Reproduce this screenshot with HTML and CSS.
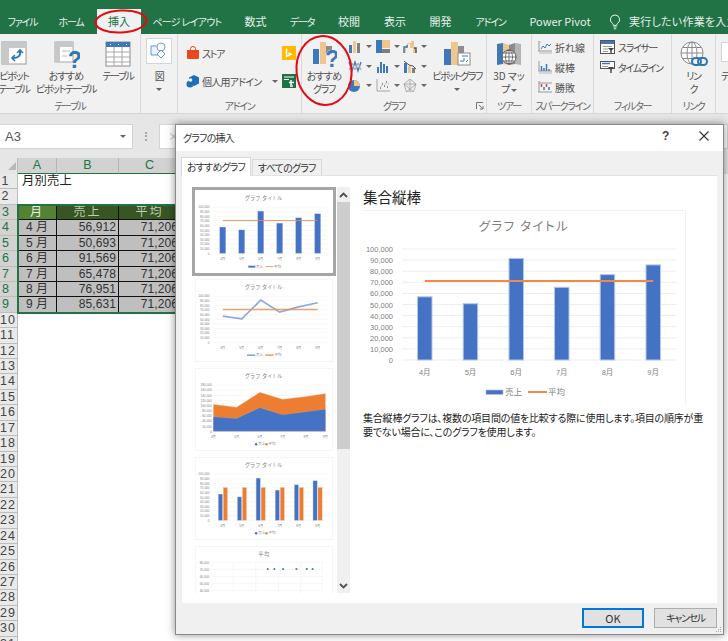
FILE: index.html
```html
<!DOCTYPE html>
<html lang="ja">
<head>
<meta charset="utf-8">
<title>グラフの挿入</title>
<link rel="stylesheet" href="styles.css">
</head>
<body>
<div class="app">
  <nav class="tabs">
    <span class="tab kana">ファイル</span><span class="tab kana">ホーム</span><span class="tab active">挿入</span><span class="tab kana long">ページ レイアウト</span><span class="tab">数式</span><span class="tab kana">データ</span><span class="tab">校閲</span><span class="tab">表示</span><span class="tab">開発</span><span class="tab kana">アドイン</span><span class="tab">Power Pivot</span>
    <span class="tell">
      <svg width="12" height="16" viewBox="0 0 12 16"><path d="M6 1a4.6 4.6 0 0 0-2.6 8.400c.6.500.8 1.200.8 2h3.600c0-.8.200-1.500.8-2A4.600 4.600 0 0 0 6 1zM4.300 13h3.400M4.800 14.800h2.400" fill="none" stroke="#e8f1ec"/></svg>
      <span>実行したい作業を入力してください</span>
    </span>
  </nav>

  <section class="ribbon">
    <div class="group g-table">
      <div class="body">
        <div class="big b28">
          <div class="ico"><svg width="26" height="26" viewBox="0 0 26 26"><rect x="1" y="1" width="24" height="22" fill="#fff" stroke="#9a9a9a"/><rect x="1" y="1" width="24" height="6" fill="#c8c8c8"/><rect x="1" y="1" width="7" height="22" fill="#c8c8c8"/><path d="M19 10c1 5-2 7-7 7" fill="none" stroke="#2f75b5" stroke-width="2"/><path d="M16 12l3-3 3 3M14 14l-3 3 3 3" fill="none" stroke="#2f75b5" stroke-width="1.600"/></svg></div>
          <span>ピボット</span><span>テーブル</span>
        </div>
        <div class="big b76">
          <div class="ico"><svg width="28" height="28" viewBox="0 0 28 28"><rect x="3" y="1" width="18" height="20" fill="#fff" stroke="#a6a6a6"/><rect x="3" y="1" width="18" height="5" fill="#c8c8c8"/><rect x="3" y="1" width="5" height="20" fill="#c8c8c8"/><path d="M10 10h8M10 15h5" stroke="#bbb"/><text x="22" y="27" class="qm">?</text></svg></div>
          <span class="hira">おすすめ</span><span>ピボットテーブル</span>
        </div>
        <div class="big b28">
          <div class="ico"><svg width="26" height="26" viewBox="0 0 26 26"><rect x="1" y="1" width="24" height="24" fill="#fff" stroke="#8c8c8c"/><rect x="1" y="1" width="24" height="5" fill="#3f78b8"/><path d="M1 11h24M1 16h24M1 21h24M9 6v19M17 6v19" stroke="#a6a6a6"/><path d="M5 3.500h1M13 3.500h1M21 3.500h1" stroke="#fff"/></svg></div>
          <span>テーブル</span>
        </div>
      </div>
      <div class="label">テーブル</div>
    </div>

    <div class="group g-fig">
      <div class="body">
        <div class="figbtn"><svg width="18" height="18" viewBox="0 0 18 18"><path d="M1 4h9v9H1z" fill="#eaf2fa" stroke="#5b9bd5"/><circle cx="11" cy="5" r="4" fill="#fff" stroke="#7f9fc4"/><path d="M11 8l4 4-4 4-4-4z" fill="#fff" stroke="#5b9bd5"/></svg></div>
        <span class="fig-label">図</span>
        <i class="caret"></i>
      </div>
      <div class="label"></div>
    </div>

    <div class="group g-addin">
      <div class="body">
        <div class="addin-left">
          <div class="addin-row"><svg width="14" height="14" viewBox="0 0 14 14"><path d="M1 4h12v8a1 1 0 0 1-1 1H2a1 1 0 0 1-1-1z" fill="#e8491d"/><path d="M4.500 5V2.500a2.500 2 0 0 1 5 0V5" fill="none" stroke="#e8491d"/></svg><span>ストア</span></div>
          <div class="addin-row"><svg width="14" height="14" viewBox="0 0 14 14"><path d="M8 1l5 2.500v6L8 12 3 9.500v-6z" fill="#1c6fb8"/><circle cx="4" cy="10" r="3.500" fill="#1c6fb8"/><circle cx="4.500" cy="6" r="1.800" fill="#fff"/></svg><span class="hira">個人用アドイン</span><i class="caret inline"></i></div>
        </div>
        <div class="addin-right">
          <div class="addin-ico"><svg width="14" height="14" viewBox="0 0 14 14"><rect width="14" height="14" fill="#ffb900"/><path d="M4.500 2.500v8l4.500-2.200-2.500-1.300" fill="none" stroke="#fff" stroke-width="1.500"/></svg></div>
          <div class="addin-ico"><svg width="14" height="14" viewBox="0 0 14 14"><rect width="14" height="14" fill="#1e7145"/><path d="M2 3h10M2 5.500h5" stroke="#fff"/><path d="M9 6v5M7 8.500h5M8 12h3" stroke="#fff" stroke-width="1.500"/></svg></div>
        </div>
      </div>
      <div class="label">アドイン</div>
    </div>

    <div class="group g-chart">
      <div class="body">
        <div class="big b44">
          <div class="ico"><svg class="tall" width="26" height="28" viewBox="0 0 26 28"><rect x="2" y="9" width="6" height="15" fill="#3f78b8"/><rect x="9" y="2" width="6" height="22" fill="#edc78f"/><rect x="15" y="6" width="6" height="8" fill="#8c8c8c"/><text x="20.500" y="27" class="qm q2">?</text></svg></div>
          <span class="hira">おすすめ</span><span>グラフ</span>
        </div>
        <div class="minis">
          <div class="mini"><svg width="14" height="13" viewBox="0 0 14 13"><rect x="1" y="5" width="3" height="8" fill="#3f78b8"/><rect x="5" y="1" width="3" height="12" fill="#edc78f"/><rect x="9" y="3" width="3" height="10" fill="#7f7f7f"/></svg><i class="caret inline"></i></div>
          <div class="mini"><svg width="14" height="13" viewBox="0 0 14 13"><rect x="0" y="0" width="6" height="13" fill="#3f78b8"/><rect x="6" y="0" width="8" height="8" fill="#edc78f"/><rect x="6" y="9" width="8" height="4" fill="#7f7f7f"/></svg><i class="caret inline"></i></div>
          <div class="mini"><svg width="14" height="13" viewBox="0 0 14 13"><path d="M1 13V7h3V3h4V1h3v7h2v5h-3V8H7V4H5v4H3v5z" fill="#edc78f"/><path d="M1 13V7h3V5" fill="none" stroke="#3f78b8" stroke-width="1.500"/><path d="M11 8h2v5" fill="none" stroke="#555" stroke-width="1.500"/></svg><i class="caret inline"></i></div>
          <div class="mini"><svg width="14" height="13" viewBox="0 0 14 13"><path d="M1 2l3 9 3-9 3 9 3-9" fill="none" stroke="#3f78b8" stroke-width="1.300"/><path d="M1 10l3-7 3 7 3-7 3 7" fill="none" stroke="#a6a6a6"/></svg><i class="caret inline"></i></div>
          <div class="mini"><svg width="14" height="13" viewBox="0 0 14 13"><path d="M1 13V7h2v6zM4 13V2h2v11zM7 13V4h2v9zM10 13V6h2v7z" fill="#3f78b8"/></svg><i class="caret inline"></i></div>
          <div class="mini"><svg width="14" height="13" viewBox="0 0 14 13"><rect x="1" y="3" width="3" height="10" fill="#3f78b8"/><rect x="5" y="6" width="3" height="7" fill="#edc78f"/><rect x="9" y="8" width="3" height="5" fill="#7f7f7f"/><path d="M1 1l5 4 4 1 3 3" fill="none" stroke="#555"/></svg><i class="caret inline"></i></div>
          <div class="mini"><svg width="14" height="13" viewBox="0 0 14 13"><circle cx="6" cy="7" r="6" fill="#3f78b8"/><path d="M6 7V1a6 6 0 0 1 6 6z" fill="#edc78f"/></svg><i class="caret inline"></i></div>
          <div class="mini"><svg width="14" height="13" viewBox="0 0 14 13"><path d="M1 0v12h13" fill="none" stroke="#a6a6a6"/><path d="M4 9h1M6 5h1M8 7h1M10 3h1M11 8h1" stroke="#3f78b8" stroke-width="1.500"/><path d="M5 7h1M9 5h1M12 5h1" stroke="#edb76a" stroke-width="1.500"/></svg><i class="caret inline"></i></div>
          <div class="mini"><svg width="14" height="13" viewBox="0 0 14 13"><path d="M7 0l6 5-2.500 8h-7L1 5zM7 0v13M1 5l12 0M3.500 13L13 5M10.500 13L1 5" fill="#eee" stroke="#a0a0a0" stroke-width=".8"/></svg><i class="caret inline"></i></div>
        </div>
        <div class="big b56">
          <div class="ico"><svg width="28" height="26" viewBox="0 0 28 26"><rect x="1" y="8" width="7" height="16" fill="#3f78b8"/><rect x="8" y="1" width="7" height="23" fill="#edc78f"/><rect x="15" y="5" width="6" height="8" fill="#8c8c8c"/><rect x="15" y="12" width="12" height="12" fill="#fff" stroke="#8c8c8c"/><path d="M17 20h4v-3M19 15h6M23 21l2-2" fill="none" stroke="#3f78b8"/></svg></div>
          <span class="tighter">ピボットグラフ</span>
          <i class="caret down"></i>
        </div>
      </div>
      <div class="label">グラフ<svg class="launcher" width="8" height="8" viewBox="0 0 8 8"><path d="M.5 7V.5H7M3 3l4 4M7 4v3H4" fill="none" stroke="#777"/></svg></div>
    </div>

    <div class="group g-tour">
      <div class="body">
        <div class="big b45">
          <div class="ico"><svg width="26" height="27" viewBox="0 0 26 27"><path d="M1 3l6-1v21l-6 1z" fill="#3f78b8"/><path d="M7 2l6 2v20l-6-1z" fill="#edc78f"/><path d="M13 4l6-2v21l-6 1z" fill="#8c8c8c"/><path d="M19 2l6 1v21l-6-1z" fill="#b5b5b5"/><circle cx="13" cy="16" r="7" fill="#fff" stroke="#555"/><path d="M6 16h14M13 9v14M8 12h10M8 20h10" stroke="#555" stroke-width=".8"/><ellipse cx="13" cy="16" rx="3.500" ry="7" fill="none" stroke="#555" stroke-width=".8"/></svg></div>
          <span class="plain">3D マッ</span><span>プ <i class="caret inline tight"></i></span>
        </div>
      </div>
      <div class="label">ツアー</div>
    </div>

    <div class="group g-spark">
      <div class="body rows">
        <div class="row-item"><svg width="14" height="13" viewBox="0 0 14 13"><path d="M1 0v10M0 10h14" stroke="#999"/><path d="M3 8l2-3 2 2 2-4 2 2 2-2" fill="none" stroke="#3f78b8"/><path d="M1 1h2M1 12h13" stroke="#bbb"/></svg><span class="plain">折れ線</span></div>
        <div class="row-item"><svg width="14" height="13" viewBox="0 0 14 13"><path d="M1 0v10M0 10h14" stroke="#999"/><path d="M3.500 10V5M6 10V7M8.500 10V3M11 10V8" stroke="#3f78b8" stroke-width="1.500"/><path d="M1 12h13" stroke="#bbb"/></svg><span class="plain">縦棒</span></div>
        <div class="row-item"><svg width="14" height="13" viewBox="0 0 14 13"><path d="M1 0v11M0 11h14M1 2h13" stroke="#999"/><path d="M3.500 3v3M8.500 3v3" stroke="#d14a3a" stroke-width="1.500"/><path d="M6 6v3M11 6v3" stroke="#3f78b8" stroke-width="1.500"/></svg><span class="plain">勝敗</span></div>
      </div>
      <div class="label">スパークライン</div>
    </div>

    <div class="group g-filter">
      <div class="body rows">
        <div class="row-item"><svg width="15" height="14" viewBox="0 0 15 14"><rect x=".5" y=".5" width="14" height="13" fill="#fff" stroke="#555"/><rect x="1" y="1" width="13" height="3" fill="#3f78b8"/><path d="M3 6.500h9M3 9h5M3 11.500h5" stroke="#999"/><path d="M8 8h6l-2.300 2.500V13h-1.400v-2.500z" fill="#444"/></svg><span>スライサー</span></div>
        <div class="row-item"><svg width="15" height="14" viewBox="0 0 15 14"><rect x=".5" y="1.500" width="14" height="7" fill="#fff" stroke="#555"/><path d="M2 3.500h8" stroke="#3f78b8" stroke-width="1.500"/><path d="M2 6.500h6" stroke="#999"/><path d="M8 7h6l-2.300 2.500V13h-1.400V9.500z" fill="#444"/></svg><span>タイムライン</span></div>
      </div>
      <div class="label">フィルター</div>
    </div>

    <div class="group g-link">
      <div class="body">
        <div class="big b44">
          <div class="ico"><svg width="30" height="28" viewBox="0 0 30 28"><circle cx="13" cy="12" r="11" fill="#fff" stroke="#8a8a8a"/><ellipse cx="13" cy="12" rx="5" ry="11" fill="none" stroke="#8a8a8a"/><path d="M2 12h22M3.500 6.500h19M3.500 17.500h19M13 1v22" stroke="#8a8a8a"/><rect x="13" y="17" width="9" height="7" rx="3.500" fill="#f1f1f1" stroke="#2f75b5" stroke-width="2"/><rect x="19" y="17" width="9" height="7" rx="3.500" fill="none" stroke="#2f75b5" stroke-width="2"/></svg></div>
          <span>リン</span><span>ク</span>
        </div>
      </div>
      <div class="label">リンク</div>
    </div>

    <div class="group g-more">
      <div class="body">
        <div class="more-box"></div>
        <span class="more-text">テ</span>
      </div>
    </div>
  </section>

  <section class="formula">
    <div class="namebox"><span>A3</span><i class="caret"></i></div>
    <div class="dots"></div>
    <div class="fbox"><span>×</span></div>
  </section>

  <section class="sheet">
    <div class="rowhead">
      <div class="corner"><i></i></div>
      <div class="rh">1</div><div class="rh">2</div><div class="rh sel">3</div><div class="rh sel">4</div><div class="rh sel">5</div><div class="rh sel">6</div><div class="rh sel">7</div><div class="rh sel">8</div><div class="rh sel">9</div><div class="rh">10</div><div class="rh">11</div><div class="rh">12</div><div class="rh">13</div><div class="rh">14</div><div class="rh">15</div><div class="rh">16</div><div class="rh">17</div><div class="rh">18</div><div class="rh">19</div><div class="rh">20</div><div class="rh">21</div><div class="rh">22</div><div class="rh">23</div><div class="rh">24</div><div class="rh">25</div><div class="rh">26</div><div class="rh">27</div><div class="rh">28</div><div class="rh">29</div><div class="rh">30</div><div class="rh">31</div>
    </div>
    <div class="cells">
      <div class="colheads"><div>A</div><div>B</div><div>C</div></div>
      <div class="textrow">月別売上</div>
      <div class="textrow"></div>
      <div class="data">
        <div class="th cur">月</div><div class="th">売上</div><div class="th">平均</div>
        <div class="td c">4 月</div><div class="td r">56,912</div><div class="td r">71,206</div>
        <div class="td c">5 月</div><div class="td r">50,693</div><div class="td r">71,206</div>
        <div class="td c">6 月</div><div class="td r">91,569</div><div class="td r">71,206</div>
        <div class="td c">7 月</div><div class="td r">65,478</div><div class="td r">71,206</div>
        <div class="td c">8 月</div><div class="td r">76,951</div><div class="td r">71,206</div>
        <div class="td c">9 月</div><div class="td r">85,631</div><div class="td r">71,206</div>
      </div>
    </div>
  </section>
</div>

<svg class="marks" width="728" height="641" viewBox="0 0 728 641">
  <ellipse cx="121" cy="21.500" rx="25.500" ry="11" transform="rotate(-3 121 21.500)"/>
  <ellipse cx="324" cy="70.500" rx="27.500" ry="34.500" transform="rotate(-6 324 70.500)"/>
</svg>

<div class="dialog">
  <header class="d-title">
    <span>グラフの挿入</span>
    <b class="d-help">?</b>
    <svg class="d-close" width="12" height="12" viewBox="0 0 12 12"><path d="M1.500 1.500l9 9M10.500 1.500l-9 9" stroke="#333" stroke-width="1.100"/></svg>
  </header>
  <div class="d-body">
    <div class="d-tabs"><span class="d-tab on">おすすめグラフ</span><span class="d-tab">すべてのグラフ</span></div>
    <div class="d-panel">
      <div class="thumbs">
        <div class="thumb picked"><svg viewBox="0 0 324 195"><use href="#col-chart"/></svg></div>
        <div class="thumb"><svg viewBox="0 0 324 195">
          <use href="#frame"/>
          <polyline class="ln blue" points="62.800,86.800 108.500,93.700 154.200,48.400 199.800,77.300 245.500,64.600 291.200,54.900"/>
          <line class="ln orange" x1="62.800" y1="71" x2="291.200" y2="71"/>
          <use href="#xlabels"/>
          <line class="ln blue" x1="121" y1="181" x2="141" y2="181"/><text class="t" x="143" y="184">売上</text>
          <line class="ln orange" x1="165" y1="181" x2="185" y2="181"/><text class="t" x="187" y="184">平均</text>
        </svg></div>
        <div class="thumb"><svg viewBox="0 0 324 195">
          <text class="t title" x="162" y="21">グラフ タイトル</text>
          <g class="grid"><path d="M40 39h274M40 51.300h274M40 63.700h274M40 76h274M40 88.300h274M40 100.700h274M40 113h274M40 125.300h274M40 137.700h274M40 150h274"/></g>
          <g class="t end"><text x="36" y="42">180,000</text><text x="36" y="54">160,000</text><text x="36" y="67">140,000</text><text x="36" y="79">120,000</text><text x="36" y="91">100,000</text><text x="36" y="104">80,000</text><text x="36" y="116">60,000</text><text x="36" y="128">40,000</text><text x="36" y="141">20,000</text><text x="36" y="153">0</text></g>
          <path d="M40 150V85L96 92 152 56 207 73 263 66 310 59V150z" fill="#ed7d31" stroke="#f8cbad"/>
          <path d="M40 150V115L96 119 152 93 207 110 263 103 310 97V150z" fill="#4472c4" stroke="#b4c7e7" stroke-width=".5"/>
          <g class="t mid"><text x="40" y="165">4月</text><text x="96" y="165">5月</text><text x="152" y="165">6月</text><text x="207" y="165">7月</text><text x="263" y="165">8月</text><text x="310" y="165">9月</text></g>
          <circle cx="143" cy="181" r="3" fill="#4472c4"/><text class="t" x="148" y="184">売上</text>
          <circle cx="168" cy="181" r="3" fill="#ed7d31"/><text class="t" x="173" y="184">平均</text>
        </svg></div>
        <div class="thumb"><svg viewBox="0 0 324 195">
          <use href="#frame"/>
          <g fill="#4472c4" stroke="#b4c7e7">
            <rect x="52" y="86.800" width="10" height="63.200"/><rect x="98" y="93.700" width="10" height="56.300"/><rect x="143" y="48.400" width="10" height="101.600"/><rect x="189" y="77.300" width="10" height="72.700"/><rect x="235" y="64.600" width="10" height="85.400"/><rect x="280" y="54.900" width="10" height="95.100"/>
          </g>
          <g fill="#ed7d31" stroke="#f8cbad">
            <rect x="64" y="71" width="10" height="79"/><rect x="110" y="71" width="10" height="79"/><rect x="155" y="71" width="10" height="79"/><rect x="201" y="71" width="10" height="79"/><rect x="247" y="71" width="10" height="79"/><rect x="292" y="71" width="10" height="79"/>
          </g>
          <use href="#xlabels"/>
          <circle cx="143" cy="181" r="3" fill="#4472c4"/><text class="t" x="148" y="184">売上</text>
          <circle cx="168" cy="181" r="3" fill="#ed7d31"/><text class="t" x="173" y="184">平均</text>
        </svg></div>
        <div class="thumb"><svg viewBox="0 0 324 195">
          <text class="t title" x="162" y="21">平均</text>
          <g class="grid"><path d="M36 37h267M36 54h267M36 71h267M36 88h267M36 105h267M36 37v80M88 37v80M142 37v80M197 37v80M250 37v80M303 37v80"/></g>
          <g class="t end"><text x="30" y="40">80,000</text><text x="30" y="57">70,000</text><text x="30" y="74">60,000</text><text x="30" y="91">50,000</text><text x="30" y="108">40,000</text></g>
          <g fill="#4472c4"><circle cx="171" cy="53" r="2.500"/><circle cx="187" cy="53" r="2.500"/><circle cx="208" cy="53" r="2.500"/><circle cx="240" cy="53" r="2.500"/><circle cx="265" cy="53" r="2.500"/><circle cx="279" cy="53" r="2.500"/></g>
        </svg></div>
      </div>
      <div class="scroll">
        <div class="sb-btn"><svg width="9" height="6" viewBox="0 0 9 6"><path d="M1 5l3.500-3.500L8 5" fill="none" stroke="#505050" stroke-width="1.800"/></svg></div>
        <div class="sb-thumb"></div>
        <div class="sb-track"></div>
        <div class="sb-btn"><svg width="9" height="6" viewBox="0 0 9 6"><path d="M1 1l3.500 3.500L8 1" fill="none" stroke="#505050" stroke-width="1.800"/></svg></div>
      </div>
      <div class="detail">
        <h2>集合縦棒</h2>
        <div class="preview">
          <svg width="324" height="195" viewBox="0 0 324 195">
            <defs>
              <g id="frame">
                <text class="t title" x="162" y="21">グラフ タイトル</text>
                <g class="grid"><path d="M40 39h274M40 50.100h274M40 61.200h274M40 72.300h274M40 83.400h274M40 94.500h274M40 105.600h274M40 116.700h274M40 127.800h274M40 138.900h274M40 150h274"/></g>
                <g class="t end"><text x="31" y="42">100,000</text><text x="31" y="53">90,000</text><text x="31" y="64">80,000</text><text x="31" y="75">70,000</text><text x="31" y="86">60,000</text><text x="31" y="97.500">50,000</text><text x="31" y="108.500">40,000</text><text x="31" y="119.500">30,000</text><text x="31" y="130.500">20,000</text><text x="31" y="141.500">10,000</text><text x="31" y="153">0</text></g>
              </g>
              <g id="xlabels" class="t mid"><text x="62.800" y="165">4月</text><text x="108.500" y="165">5月</text><text x="154.200" y="165">6月</text><text x="199.800" y="165">7月</text><text x="245.500" y="165">8月</text><text x="291.200" y="165">9月</text></g>
              <g id="col-chart">
                <use href="#frame"/>
                <g fill="#4472c4" stroke="#b4c7e7">
                  <rect x="55.500" y="86.800" width="14.500" height="63.200"/><rect x="101.200" y="93.700" width="14.500" height="56.300"/><rect x="147" y="48.400" width="14.500" height="101.600"/><rect x="192.500" y="77.300" width="14.500" height="72.700"/><rect x="238.200" y="64.600" width="14.500" height="85.400"/><rect x="284" y="54.900" width="14.500" height="95.100"/>
                </g>
                <line class="ln orange" x1="62.800" y1="71" x2="291.200" y2="71"/>
                <use href="#xlabels"/>
                <rect x="124" y="180" width="17" height="4.500" fill="#4472c4" stroke="#b4c7e7" stroke-width=".6"/><text class="t" x="143" y="185">売上</text>
                <line class="ln orange" x1="166" y1="182" x2="185" y2="182"/><text class="t" x="186" y="185">平均</text>
              </g>
            </defs>
            <use href="#col-chart"/>
          </svg>
        </div>
        <p>集合縦棒グラフは、複数の項目間の値を比較する際に使用します。項目の順序が重要でない場合に、このグラフを使用します。</p>
      </div>
    </div>
    <footer class="d-foot">
      <button class="btn ok">OK</button>
      <button class="btn cancel">キャンセル</button>
      <svg class="grip" width="7" height="7" viewBox="0 0 7 7"><path d="M5 1h1v1H5zM3 3h1v1H3zM5 3h1v1H5zM1 5h1v1H1zM3 5h1v1H3zM5 5h1v1H5z" fill="#a8a8a8"/></svg>
    </footer>
  </div>
</div>
</body>
</html>
```

FILE: styles.css
```css
* { box-sizing: border-box; }
html, body { margin: 0; height: 100%; }
body {
  position: relative;
  width: 728px;
  height: 641px;
  overflow: hidden;
  background: #fff;
  color: #444;
  font-family: "Noto Sans CJK JP", "Noto Sans", sans-serif;
  font-size: 11px;
  font-feature-settings: "palt";
}
svg { display: block; }

/* ---------- tabs ---------- */
.tabs {
  display: grid;
  grid-template-columns: 45px 52px 44px 92px 45px 48px 46px 46px 45px 55px 84px 1fr;
  height: 34px;
  padding-top: 9px;
  background: #217346;
  color: #e6f0ea;
  line-height: 25px;
  white-space: nowrap;
}
.tab { text-align: center; }
.tab.kana { font-size: 10px; letter-spacing: -1.200px; }
.tab.long { letter-spacing: -.700px; }
.tab.active { background: #f1f1f1; color: #217346; }
.tell { display: flex; align-items: center; gap: 8px; padding-left: 7px; overflow: hidden; letter-spacing: .250px; }
.tell svg { flex: none; }

/* ---------- ribbon ---------- */
.ribbon {
  display: grid;
  grid-template-columns: 141px 37px 124px 185px 45px 62px 78px 44px 12px;
  height: 80px;
  background: #f1f1f1;
  border-bottom: 1px solid #d6d6d6;
  color: #505050;
  font-size: 10px;
  letter-spacing: -1.300px;
  white-space: nowrap;
  line-height: 13px;
}
.hira { letter-spacing: -.800px; }
.tighter { letter-spacing: -1.600px; }
.plain { letter-spacing: 0; }
.group {
  display: flex;
  flex-direction: column;
  border-right: 1px solid #dadada;
}
.body { flex: 1; display: flex; min-height: 0; }
.label { position: relative; height: 14px; line-height: 14px; text-align: center; color: #666; }
.launcher { position: absolute; right: 2px; top: 3px; }

.big { display: flex; flex-direction: column; align-items: center; flex: none; padding-top: 6px; }
.ico { height: 29px; padding-top: 1px; }
.ico .tall { margin-top: -1px; }
.b28 { width: 28px; }
.b44 { width: 44px; }
.b45 { width: 44px; }
.b56 { width: 56px; }
.b76 { width: 76px; }

.caret {
  display: block;
  width: 0;
  height: 0;
  border: 3px solid transparent;
  border-top: 3px solid #666;
  border-bottom: 0;
}
.caret.inline { display: inline-block; margin-left: 9px; vertical-align: middle; flex: none; }
.caret.tight { margin-left: 1px; }
.caret.down { margin-top: 6px; }

.g-fig .body { flex-direction: column; align-items: center; padding-top: 4px; }
.figbtn {
  display: flex; align-items: center; justify-content: center;
  width: 26px; height: 26px;
  background: #fff;
  border: 1px solid #d4d4d4;
}
.fig-label { margin-top: 5px; }
.g-fig .caret { margin-top: 6px; }

.g-addin .body { padding: 5px 0 0 8px; }
.addin-left, .addin-right { display: flex; flex-direction: column; flex: none; }
.addin-left { width: 96px; }
.addin-row, .addin-ico { display: flex; align-items: center; height: 28px; }
.addin-row { gap: 2px; }

.minis {
  display: grid;
  grid-template-columns: repeat(3, 27.500px);
  grid-auto-rows: 19.500px;
  flex: none;
  width: 83px;
  padding-top: 3px;
}
.mini { display: flex; align-items: center; padding-left: 2px; }
.mini .caret.inline { margin-left: 4px; }

.rows { flex-direction: column; padding: 3px 0 0 6px; }
.row-item { display: flex; align-items: center; gap: 3px; height: 20px; }
.row-item svg { flex: none; }

.g-tour .big, .g-link .big { width: 100%; }
.g-more { border: 0; }
.g-more .body { flex-direction: column; padding: 8px 0 0 5px; }
.more-box { width: 20px; height: 20px; background: #fff; border: 1px solid #d4d4d4; }
.more-text { margin-top: 7px; }

/* ---------- formula bar ---------- */
.formula {
  display: flex;
  align-items: flex-start;
  height: 44px;
  padding-top: 10px;
  background: #e6e6e6;
}
.namebox {
  position: relative;
  display: flex;
  align-items: center;
  justify-content: space-between;
  width: 133px;
  height: 25px;
  padding: 0 6px 0 5px;
  background: #fff;
  border: 1px solid #d4d4d4;
  border-left: 0;
  font-family: "Liberation Sans", sans-serif;
  font-size: 13px;
  color: #555;
}
.dots {
  width: 2px;
  height: 9px;
  margin: 8px 12px 0 12px;
  border-left: 2px dotted #a8a8a8;
}
.fbox {
  flex: 1;
  height: 25px;
  padding-left: 8px;
  background: #fff;
  border: 1px solid #d4d4d4;
  color: #bbb;
  line-height: 23px;
}

/* ---------- sheet ---------- */
.sheet {
  display: flex;
  height: 483px;
  overflow: hidden;
  font-family: "Liberation Sans", "Noto Sans CJK JP", sans-serif;
  color: #333;
}
.rowhead { flex: none; width: 18px; }
.corner {
  position: relative;
  height: 16px;
  background: #e6e6e6;
  border-right: 1px solid #bbb;
}
.corner i {
  position: absolute;
  left: 8px;
  top: 4px;
  width: 8px;
  height: 8px;
  background: #b8b8b8;
  clip-path: polygon(100% 0, 100% 100%, 0 100%);
}
.rh {
  height: 15.430px;
  padding-right: 6px;
  background: #e9e9e9;
  border-bottom: 1px solid #bdbdbd;
  border-right: 1px solid #bdbdbd;
  color: #444;
  font-size: 12.500px;
  line-height: 15px;
  letter-spacing: 1px;
  text-align: center;
  white-space: nowrap;
}
.rh.sel { background: #d2d2d2; color: #217346; border-right: 0; }
.cells { flex: 1; min-width: 0; font-size: 12px; }
.colheads {
  display: grid;
  grid-template-columns: 39px 62px 62px 1fr;
  height: 16px;
  background: #e6e6e6;
}
.colheads div {
  background: #d2d2d2;
  border-right: 1px solid #b4b4b4;
  border-bottom: 1px solid #217346;
  color: #217346;
  font-size: 12.500px;
  line-height: 15px;
  text-align: center;
}
.textrow { height: 15.430px; padding-left: 4px; font-size: 12.300px; line-height: 15px; letter-spacing: .2px; color: #222; }
.data {
  display: grid;
  grid-template-columns: 39px 62px 62px;
  grid-auto-rows: 15.430px;
  width: 163px;
  outline: 2px solid #217346;
  outline-offset: -1px;
}
.th, .td { border-right: 1px solid #111; border-bottom: 1px solid #111; line-height: 15px; white-space: nowrap; }
.th { background: #375623; color: #bccdb0; text-align: center; letter-spacing: 2px; }
.th.cur { background: #548235; color: #e6efdf; }
.td { background: #bfbfbf; color: #333; }
.td.c { text-align: center; }
.td.r { text-align: right; padding-right: 2px; letter-spacing: .1px; }

/* ---------- hand-drawn marks ---------- */
.marks { position: absolute; left: 0; top: 0; pointer-events: none; }
.marks ellipse { fill: none; stroke: #e50914; stroke-width: 2; }

/* ---------- dialog ---------- */
.dialog {
  position: absolute;
  left: 175px;
  top: 124px;
  width: 549px;
  height: 511px;
  display: flex;
  flex-direction: column;
  background: #f0f0f0;
  border: 1px solid #8a8a8a;
  box-shadow: 0 0 8px rgba(0, 0, 0, .45);
  color: #333;
}
.d-title {
  position: relative;
  flex: none;
  display: flex;
  align-items: center;
  height: 26px;
  padding: 0 0 2px 7px;
  background: #fff;
  font-size: 10px;
  letter-spacing: -.800px;
}
.d-help { position: absolute; left: 486px; top: 4px; font-family: "Liberation Sans", sans-serif; font-size: 12px; color: #444; }
.d-close { position: absolute; left: 522px; top: 5px; }
.d-body { flex: 1; display: flex; flex-direction: column; min-height: 0; padding: 6px 6px 0; }
.d-tabs { display: flex; align-items: flex-end; height: 19px; margin-left: -1px; }
.d-tab {
  height: 17px;
  padding: 0 5px;
  margin-left: 1px;
  border: 1px solid #d9d9d9;
  border-bottom: 0;
  font-size: 10px;
  letter-spacing: -.800px;
  line-height: 16px;
  color: #333;
}
.d-tab.on { position: relative; height: 19px; margin-left: 0; background: #fff; line-height: 17px; z-index: 1; }
.d-panel {
  flex: none;
  display: flex;
  height: 428px;
  padding: 11px 0 10px 10px;
  background: #fff;
  border-top: 1px solid #e3e3e3;
  margin-top: -1px;
}
.thumbs {
  flex: none;
  display: flex;
  flex-direction: column;
  gap: 6px;
  width: 145px;
  height: 407px;
  padding: 3px 0 0 3px;
  overflow: hidden;
}
.thumb { flex: none; width: 138px; height: 83px; background: #fff; border: 1px solid #f6f6f6; }
.thumb svg { width: 100%; height: 100%; }
.thumb.picked { outline: 3px solid #a6a6a6; border-color: #fff; }
.thumb .ln { stroke-width: 4; opacity: .8; }

.scroll { flex: none; display: flex; flex-direction: column; width: 13px; background: #f0f0f0; }
.sb-btn { flex: none; display: flex; align-items: center; justify-content: center; height: 15px; }
.sb-thumb { flex: none; height: 247px; background: #cdcdcd; }
.sb-track { flex: 1; }

.detail { flex: none; width: 354px; margin-left: 12px; padding-right: 8px; }
.detail h2 { margin: 0 0 3px 1px; font-size: 14.500px; font-weight: 400; line-height: 20px; color: #222; }
.preview { width: 324px; height: 195px; border-top: 1px solid #f2f2f2; border-right: 1px solid #f2f2f2; }
.preview svg { margin-top: -1px; }
.detail p { margin: 6px 0 0 1px; font-size: 10px; letter-spacing: -.200px; line-height: 14px; color: #222; }

.d-foot { position: relative; flex: 1; display: flex; justify-content: flex-end; gap: 10px; padding: 5px 0 0; }
.btn {
  width: 63px;
  height: 20px;
  padding: 0;
  background: #e1e1e1;
  border: 1px solid #adadad;
  border-radius: 0;
  color: #333;
  font-family: inherit;
  font-feature-settings: inherit;
  font-size: 11px;
  line-height: 16px;
}
.btn.ok { border: 2px solid #0078d7; width: 62px; }
.btn.cancel { font-size: 10px; letter-spacing: -1.300px; }
.grip { position: absolute; right: -5px; bottom: 1px; }

/* ---------- chart text ---------- */
.t { fill: #7f7f7f; font-family: "Noto Sans CJK JP", "Liberation Sans", sans-serif; font-size: 8.500px; }
.t text { font-family: "Liberation Sans", "Noto Sans CJK JP", sans-serif; font-size: 7.500px; }
.end { text-anchor: end; }
.mid { text-anchor: middle; }
.title { font-size: 12.500px; letter-spacing: 1.500px; text-anchor: middle; }
.grid path { fill: none; stroke: #eeeeee; stroke-width: 1; }
.ln { fill: none; stroke-width: 2; }
.ln.blue { stroke: #6f93d6; }
.ln.orange { stroke: #f08a4b; }

/* ---------- glyph question mark in icons ---------- */
.qm { fill: #2f75b5; font-family: "Liberation Sans", sans-serif; font-weight: 700; font-size: 23px; text-anchor: middle; }
.q2 { fill: #3f78b8; stroke: #fff; stroke-width: .5; paint-order: stroke; }
```
